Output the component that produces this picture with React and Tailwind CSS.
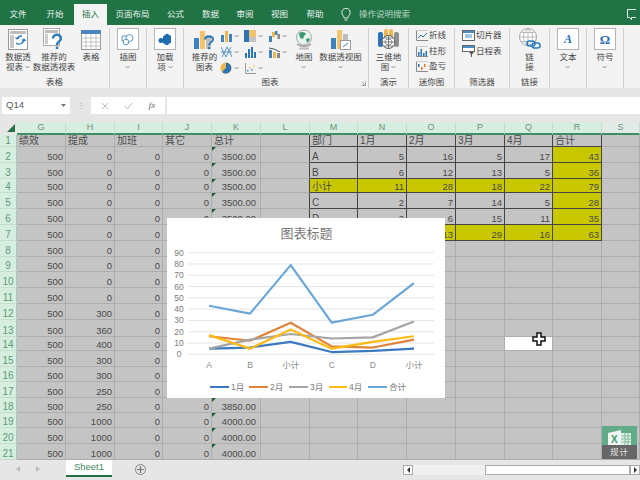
import React from 'react';

const Chev = ({ c = '#777' }) => (
  <svg width="5" height="4" viewBox="0 0 5 4" className="shrink-0"><path d="M0.5 1 L2.5 3 L4.5 1" fill="none" stroke={c} strokeWidth="0.8" /></svg>
);

const PivotIcon = () => (
  <svg width="20" height="21" viewBox="0 0 20 21"><rect x=".5" y=".5" width="19" height="20" fill="#fff" stroke="#999" /><rect x="2" y="2" width="16" height="3" fill="#bdbdbd" /><rect x="2" y="6" width="4" height="13" fill="#c8c8c8" /><path d="M8 14a5 5 0 0 0 8-4M16 10l-2 1.500M16 10l1.500 2M14 7a5 5 0 0 0-5 3M9 10l-1.500-1.500M9 10l2-1" fill="none" stroke="#2b7cb8" strokeWidth="1.300" /></svg>
);
const RecPivotIcon = () => (
  <svg width="22" height="22" viewBox="0 0 22 22"><rect x=".5" y=".5" width="16" height="17" fill="#fff" stroke="#aaa" /><rect x="2" y="2" width="13" height="3" fill="#bdbdbd" /><rect x="2" y="6" width="3" height="10" fill="#ccc" /><path d="M10 10.500c0-5 8-5 8 0 0 3-4 3-4 6.500" fill="none" stroke="#2b7cb8" strokeWidth="2.300" /><rect x="12.800" y="18.500" width="2.500" height="2.500" fill="#2b7cb8" /></svg>
);
const TableIcon = () => (
  <svg width="20" height="20" viewBox="0 0 20 20"><rect x=".5" y=".5" width="19" height="19" fill="#fff" stroke="#999" /><rect x="0" y="0" width="20" height="4" fill="#4d86bd" /><path d="M0 8h20M0 12h20M0 16h20M5 4v16M10 4v16M15 4v16" stroke="#b5b5b5" strokeWidth=".8" /></svg>
);
const BoxIcon = ({ children }) => (
  <div className="w-[22px] h-[22px] bg-white border border-[#b4b4b4] flex items-center justify-center">{children}</div>
);
const IllIcon = () => (
  <svg width="14" height="13" viewBox="0 0 14 13"><path d="M1 3h6v5H1z" fill="#fff" stroke="#5a97c8" /><circle cx="8.500" cy="5" r="3.500" fill="#fff" stroke="#5a97c8" /><circle cx="5" cy="9" r="2.800" fill="#fff" stroke="#5a97c8" /></svg>
);
const AddIcon = () => (
  <svg width="14" height="13" viewBox="0 0 14 13"><path d="M5 3.500 9 .5 13 3v6.500L9 12.500 5 10z" fill="#1f6cb0" /><circle cx="3" cy="7.500" r="2.500" fill="#1f6cb0" /></svg>
);
const RecChartIcon = () => (
  <svg width="21" height="20" viewBox="0 0 21 20"><rect x="0" y="8" width="5" height="11" fill="#3f82c0" /><rect x="6" y="1" width="5" height="18" fill="#f2c46d" /><rect x="12" y="5" width="5" height="14" fill="#bdbdbd" /><path d="M11 9.500c0-4 8-4 8 0 0 2.500-4 2.500-4 6" fill="none" stroke="#2b7cb8" strokeWidth="2" /><rect x="14" y="17" width="2.200" height="2.200" fill="#2b7cb8" /></svg>
);
const Bars = () => (
  <svg width="11" height="11" viewBox="0 0 11 11"><rect x="0" y="4" width="3" height="7" fill="#3f82c0" /><rect x="4" y="0" width="3" height="11" fill="#f0b64e" /><rect x="8" y="3" width="3" height="8" fill="#3f82c0" /></svg>
);
const Treemap = () => (
  <svg width="12" height="12" viewBox="0 0 12 12"><rect width="5" height="12" fill="#2d73b5" /><rect x="5" width="7" height="7" fill="#f2c46d" /><rect x="5" y="7" width="7" height="5" fill="#c4c4c4" /></svg>
);
const Waterfall = () => (
  <svg width="11" height="11" viewBox="0 0 11 11"><rect x="0" y="5" width="3" height="6" fill="#3f82c0" /><rect x="3" y="1" width="3" height="5" fill="#f0b64e" /><rect x="6" y="0" width="2.500" height="4" fill="#3f82c0" /><rect x="8.500" y="3" width="2.500" height="5" fill="#888" /></svg>
);
const Cross = () => (
  <svg width="11" height="12" viewBox="0 0 11 12"><path d="M0 1 5 11 10 1M1 11 6 1 11 11M0 6h11" fill="none" stroke="#4a8cc4" strokeWidth=".9" /></svg>
);
const Stat = () => (
  <svg width="11" height="11" viewBox="0 0 11 11"><g fill="#2d73b5"><rect y="6" width="2" height="5" /><rect x="3" y="2" width="2" height="9" /><rect x="6" y="0" width="2" height="11" /><rect x="9" y="5" width="2" height="6" /></g></svg>
);
const Combo = () => (
  <svg width="11" height="11" viewBox="0 0 11 11"><rect x="0" y="3" width="3" height="8" fill="#3f82c0" /><rect x="4" y="5" width="3" height="6" fill="#f0b64e" /><rect x="8" y="6" width="3" height="5" fill="#888" /><path d="M0 1 5 2 11 5" fill="none" stroke="#555" /></svg>
);
const Pie = () => (
  <svg width="12" height="12" viewBox="0 0 12 12"><circle cx="6" cy="6" r="5.500" fill="#f0b64e" /><path d="M6 6V.5A5.500 5.500 0 1 1 2 10z" fill="#2d73b5" /></svg>
);
const Scatter = () => (
  <svg width="11" height="11" viewBox="0 0 11 11"><path d="M.5 0v10.500H11" fill="none" stroke="#999" /><g><rect x="2" y="7" width="1.500" height="1.500" fill="#3f82c0" /><rect x="4" y="4" width="1.500" height="1.500" fill="#f0b64e" /><rect x="6" y="6" width="1.500" height="1.500" fill="#3f82c0" /><rect x="8" y="2" width="1.500" height="1.500" fill="#f0b64e" /></g></svg>
);
const Globe = () => (
  <svg width="20" height="21" viewBox="0 0 20 21"><circle cx="10" cy="8.500" r="7.500" fill="#e8f2ef" stroke="#a8a8a8" /><path d="M5 4c3-2 6-1 7 1l-2 2-1 3-3-1zM12 10l3-1 1 2-3 3z" fill="#3e9a6d" /><path d="M3 15c3 3 11 3 14 0M10 16v2" fill="none" stroke="#999" strokeWidth="1.200" /><rect x="5" y="18.500" width="10" height="2" fill="#bdbdbd" /></svg>
);
const PivotChart = () => (
  <svg width="20" height="20" viewBox="0 0 20 20"><rect x="0" y="8" width="5" height="11" fill="#3f82c0" /><rect x="6" y="0" width="5" height="19" fill="#f2c46d" /><rect x="12" y="4" width="5" height="8" fill="#bdbdbd" /><rect x="9.500" y="10.500" width="10" height="9" fill="#fff" stroke="#999" /><path d="M12 17l5-4" stroke="#2b7cb8" /></svg>
);
const Map3D = () => (
  <svg width="21" height="21" viewBox="0 0 21 21"><rect x="0" y="3" width="5" height="15" rx="2" fill="#2d73b5" /><rect x="6" y="0" width="4" height="12" rx="2" fill="#f0b64e" /><rect x="11" y="0" width="4" height="12" rx="2" fill="#f0b64e" /><rect x="16" y="3" width="5" height="15" rx="2" fill="#8f8f8f" /><circle cx="10.500" cy="13" r="6.500" fill="#fff" stroke="#555" /><path d="M4 13h13M10.500 6.500v13M6 9h9M6 17h9M7 13c0-4 7-4 7 0s-7 4-7 0" fill="none" stroke="#555" strokeWidth=".7" /></svg>
);
const Spark = ({ k }) => (
  <svg width="12" height="11" viewBox="0 0 12 11"><path d="M.5 0v10.500H12" fill="none" stroke="#8a8a8a" /><path d="M0 .5h12" stroke="#ccc" />{k === 0 && <path d="M2 8 5 5 7 7 11 3" fill="none" stroke="#2d73b5" />}{k === 1 && <g fill="#2d73b5"><rect x="2" y="6" width="1.500" height="4" /><rect x="4.500" y="3" width="1.500" height="7" /><rect x="7" y="7" width="1.500" height="3" /><rect x="9.500" y="5" width="1.500" height="5" /></g>}{k === 2 && <g><rect x="2" y="3" width="1.500" height="3" fill="#2d73b5" /><rect x="5" y="6" width="1.500" height="3" fill="#e07a2c" /><rect x="8" y="3" width="1.500" height="3" fill="#e07a2c" /></g>}</svg>
);
const Slicer = ({ k }) => (
  <svg width="13" height="12" viewBox="0 0 13 12"><rect x=".5" y=".5" width="12" height={k ? 6 : 10} fill="#fff" stroke="#666" /><rect x="1" y="1" width="11" height="2" fill="#4a8cc4" />{!k && <path d="M3 5h7M3 7h7" stroke="#4a8cc4" />}{k === 1 && <path d="M7 7h5l-2 2.500V12H9V9.500z" fill="#555" />}</svg>
);
const LinkIcon = () => (
  <svg width="22" height="22" viewBox="0 0 22 22"><circle cx="9" cy="9" r="8.500" fill="#fff" stroke="#a5a5a5" /><path d="M.5 9h17M9 .5v17M2 4.500h14M2 13.500h14M9 .5c-6 4-6 13 0 17M9 .5c6 4 6 13 0 17" fill="none" stroke="#a5a5a5" strokeWidth=".7" /><rect x="8" y="13" width="8" height="5" rx="2.500" fill="none" stroke="#2b7cb8" strokeWidth="1.500" /><rect x="13" y="15" width="8" height="5" rx="2.500" fill="none" stroke="#2b7cb8" strokeWidth="1.500" /></svg>
);
const Bulb = () => (
  <svg width="10" height="14" viewBox="0 0 10 14"><path d="M3.200 10C3 8 .8 7 .8 4.500a4.200 4.200 0 0 1 8.400 0C9.200 7 7 8 6.800 10zM3.500 12h3" fill="none" stroke="#e6f0ea" strokeWidth="1" /></svg>
);
const Comment = () => (
  <svg width="9" height="11" viewBox="0 0 9 11"><path d="M9 .5H.5v8h2l2 2V8.500H9" fill="none" stroke="#e6f0ea" /></svg>
);

const Big = ({ icon, lines, chev, w, iconTop = 'h-[22px]' }) => (
  <div className={`flex flex-col items-center shrink-0 ${w}`}>
    <div className={`flex items-end justify-center ${iconTop}`}>{icon}</div>
    <div className="mt-[2px] text-[8.500px] leading-[10px] whitespace-nowrap text-center text-[#444] flex flex-col items-center">
      {lines.map((l, i) => (
        <div key={i} className="flex items-center h-[10px] gap-[2px]">{l}{chev && i === lines.length - 1 && chev !== 'below' && <Chev />}</div>
      ))}
      {chev === 'below' && <div className="h-[10px] flex items-center"><Chev /></div>}
    </div>
  </div>
);

const Group = ({ w, label, children, className = '', labelClass = '' }) => (
  <div className={`flex flex-col h-[60px] mt-[3px] border-r border-[#d0d0d0] shrink-0 relative ${w}`}>
    <div className={`h-[49px] flex ${className}`}>{children}</div>
    <div className={`flex-1 text-center text-[8.500px] leading-[11px] text-[#444] ${labelClass}`}>{label}</div>
  </div>
);

const Small = ({ icon, chev = true }) => (
  <div className="flex items-center gap-[2px] h-[16px]">
    <div className="w-[12px] flex justify-center">{icon}</div>
    {chev && <Chev />}
  </div>
);

const Ribbon = () => (
  <div className="h-[63px] bg-[#f3f3f3] flex shrink-0">
    <Group w="w-[110px]" label="表格" className="pl-[3px]">
      <Big w="w-[30px]" icon={<PivotIcon />} lines={['数据透', '视表']} chev />
      <Big w="w-[42px]" icon={<RecPivotIcon />} lines={['推荐的', '数据透视表']} />
      <Big w="w-[32px]" icon={<TableIcon />} lines={['表格']} />
    </Group>
    <Group w="w-[37px]" label="" className="justify-center">
      <Big w="w-[30px]" icon={<BoxIcon><IllIcon /></BoxIcon>} lines={['插图']} chev="below" />
    </Group>
    <Group w="w-[37px]" label="" className="justify-center">
      <Big w="w-[30px]" icon={<BoxIcon><AddIcon /></BoxIcon>} lines={['加载', '项']} chev />
    </Group>
    <Group w="w-[185px]" label="图表" className="pl-[7px]" labelClass="pr-[12px]">
      <Big w="w-[27px]" icon={<RecChartIcon />} lines={['推荐的', '图表']} />
      <div className="flex flex-col ml-[2px] w-[24px]"><Small icon={<Bars />} /><Small icon={<Cross />} /><Small icon={<Pie />} /></div>
      <div className="flex flex-col w-[24px]"><Small icon={<Treemap />} /><Small icon={<Stat />} /><Small icon={<Scatter />} /></div>
      <div className="flex flex-col w-[21px]"><Small icon={<Waterfall />} /><Small icon={<Combo />} /></div>
      <Big w="w-[30px]" icon={<Globe />} lines={['地图']} chev="below" />
      <Big w="w-[43px]" icon={<PivotChart />} lines={['数据透视图']} chev="below" />
      <svg width="5" height="5" viewBox="0 0 5 5" className="absolute right-[2px] bottom-[2px]"><path d="M.5 4.500h4v-4M1 1l3 3" fill="none" stroke="#777" strokeWidth=".7" /></svg>
    </Group>
    <Group w="w-[40px]" label="演示" className="justify-center">
      <Big w="w-[36px]" icon={<Map3D />} lines={['三维地', '图']} chev />
    </Group>
    <Group w="w-[46px]" label="迷你图" className="flex-col pl-[7px]">
      {[['折线', 0], ['柱形', 1], ['盈亏', 2]].map(([t, k]) => (
        <div key={t} className="flex items-center gap-[1px] h-[15.500px] text-[8.500px] text-[#444]"><Spark k={k} />{t}</div>
      ))}
    </Group>
    <Group w="w-[55px]" label="筛选器" className="flex-col pl-[7px]">
      {[['切片器', 0], ['日程表', 1]].map(([t, k]) => (
        <div key={t} className="flex items-center gap-[1px] h-[15.500px] text-[8.500px] text-[#444]"><Slicer k={k} />{t}</div>
      ))}
    </Group>
    <Group w="w-[40px]" label="链接" className="justify-center">
      <Big w="w-[30px]" icon={<LinkIcon />} lines={['链', '接']} />
    </Group>
    <Group w="w-[37px]" label="" className="justify-center">
      <Big w="w-[30px]" icon={<BoxIcon><span className="text-[#2b6cb0] text-[12px] italic font-bold font-['Liberation_Serif',serif] leading-none">A</span></BoxIcon>} lines={['文本']} chev="below" />
    </Group>
    <Group w="w-[37px]" label="" className="justify-center">
      <Big w="w-[30px]" icon={<BoxIcon><span className="text-[#2b6cb0] text-[13px] font-bold font-['Liberation_Serif',serif] leading-none">Ω</span></BoxIcon>} lines={['符号']} chev="below" />
    </Group>
  </div>
);

const Tabs = () => {
  const tabs = [['文件', 'w-[36px]'], ['开始', 'w-[38px]'], ['插入', 'w-[33px]'], ['页面布局', 'w-[51px]'], ['公式', 'w-[35px]'], ['数据', 'w-[35px]'], ['审阅', 'w-[34px]'], ['视图', 'w-[35px]'], ['帮助', 'w-[36px]']];
  return (
    <div className="h-[25px] bg-[#217346] flex items-end shrink-0 text-[8.500px] text-[#e8f2ec]">
      {tabs.map(([t, w]) => (
        <div key={t} className={`${w} h-[21px] flex items-center justify-center ${t === '插入' ? 'bg-[#f3f3f3] text-[#217346]' : ''}`}>{t}</div>
      ))}
      <div className="h-[21px] flex items-center ml-[8px]"><Bulb /></div>
      <div className="h-[21px] flex items-center ml-[8px] text-[#bcd6c7]">操作说明搜索</div>
      <div className="h-[21px] flex items-center ml-auto mr-[4px]"><Comment /></div>
    </div>
  );
};

const FormulaBar = () => (
  <div className="h-[34px] bg-[#e6e6e6] shrink-0 pt-[9px] flex items-start text-[9.500px] text-[#555]">
    <div className="ml-[2px] w-[68px] h-[17px] bg-white flex items-center justify-between px-[4px]">Q14<svg width="5" height="3" viewBox="0 0 5 3"><path d="M0 0h5L2.500 3z" fill="#777" /></svg></div>
    <div className="w-[21px] h-[17px] flex items-center justify-center text-[#aaa] text-[8px]">⋮</div>
    <div className="w-[74px] h-[17px] bg-white flex items-center justify-around px-[2px] text-[#bbb]">
      <svg width="8" height="8" viewBox="0 0 8 8"><path d="M1 1l6 6M7 1L1 7" stroke="#bbb" /></svg>
      <svg width="9" height="8" viewBox="0 0 9 8"><path d="M1 4l2.500 3L8 1" fill="none" stroke="#bbb" /></svg>
      <span className="italic font-['Liberation_Serif',serif] text-[#666] text-[9px]">fx</span>
    </div>
    <div className="ml-[2px] flex-1 h-[17px] bg-white" />
  </div>
);

const COLS = ['G', 'H', 'I', 'J', 'K', 'L', 'M', 'N', 'O', 'P', 'Q', 'R', 'S'];
const hVals = [0, 0, 0, 0, 0, 0, 0, 0, 0, 0, 300, 360, 400, 300, 300, 250, 250, 1000, 1000, 1000];
const kVals = ['3500.00', '3500.00', '3500.00', '3500.00', '3500.00', '3500.00', '3500.00', '3500.00', '3500.00', '3500.00', '3800.00', '3860.00', '3900.00', '3800.00', '3800.00', '3750.00', '3850.00', '4000.00', '4000.00', '4000.00'];
const TABLE = [
  ['部门', '1月', '2月', '3月', '4月', '合计'],
  ['A', 5, 16, 5, 17, 43],
  ['B', 6, 12, 13, 5, 36],
  ['小计', 11, 28, 18, 22, 79],
  ['C', 2, 7, 14, 5, 28],
  ['D', 3, 6, 15, 11, 35],
  ['小计', 5, 13, 29, 16, 63],
];
const YELLOW = 'bg-[#c9c800]';

function cellFor(r, c) {
  const idx = COLS.indexOf(c);
  let text = '';
  let left = false;
  let inTable = false;
  let yellow = false;
  let tri = false;
  if (idx <= 4) {
    if (r === 1) { text = ['绩效', '提成', '加班', '其它', '总计'][idx]; left = true; }
    else if (c === 'G') text = 500;
    else if (c === 'H') text = hVals[r - 2];
    else if (c === 'I' || c === 'J') text = 0;
    else { text = kVals[r - 2]; tri = true; }
  }
  if (idx >= 6 && idx <= 11 && r <= 7) {
    inTable = true;
    text = TABLE[r - 1][idx - 6];
    left = r === 1 || idx === 6;
    yellow = (r >= 2 && idx === 11) || r === 4 || r === 7;
  }
  // cells wholly behind the chart show nothing
  const behind = (r >= 7 && r <= 17 && (c === 'J' || c === 'K')) || (r === 7 && (c === 'M' || c === 'N'));
  if (behind) { text = ''; tri = false; }
  return { text, left, inTable, yellow, tri };
}

const Sheet = () => {
  const rows = Array.from({ length: 21 }, (_, i) => i + 1);
  return (
    <div className="relative h-[338px] shrink-0 overflow-hidden bg-[#c4c4c4]">
      <div className="grid grid-cols-[17px_49px_49px_48px_49px_49px_49px_48px_49px_49px_49px_48px_49px_38px] grid-rows-[13px_12px_16px_16px_14px_16px_16px_16px_16px_15px_16px_16px_16px_17px_14px_16px_15px_16px_15px_15px_16px_16px] text-[9.500px] leading-[11px] text-[#4a4a4a]">
        <div className="bg-[#e6e6e6] border-b-2 border-[#e6e6e6] flex items-end justify-end pr-[2px] pb-[1px]">
          <svg width="8" height="8" viewBox="0 0 8 8"><path d="M8 0v8H0z" fill="#217346" /></svg>
        </div>
        {COLS.map((c) => (
          <div key={c} className={`border-b-2 border-b-[#3f8f66] border-r border-r-[#c6ddd0] flex items-center justify-center text-[9px] text-[#6f8f7e] ${c === 'S' ? 'bg-[#e2ece6]' : 'bg-[#d5eee0]'}`}>{c}</div>
        ))}
        {rows.map((r) => (
          <React.Fragment key={r}>
            <div className="bg-[#d5eee0] border-r border-r-[#a9c9b7] border-b border-b-[#c6ddd0] flex items-end justify-center text-[#5f9a78] text-[10px] leading-[10px]">{r}</div>
            {COLS.map((c) => {
              const { text, left, inTable, yellow, tri } = cellFor(r, c);
              const nextIsTable = c === 'L' && r <= 7;
              const border = inTable
                ? 'border-r border-r-[#454545] border-b border-b-[#454545]'
                : nextIsTable
                  ? 'border-r border-r-[#454545] border-b border-b-[#adadad]'
                  : 'border-r border-r-[#adadad] border-b border-b-[#adadad]';
              const white = r === 14 && c === 'Q';
              const bg = white ? 'bg-white' : yellow ? YELLOW : 'bg-[#c4c4c4]';
              const pad = left ? 'justify-start pl-[2px] text-[10px] leading-[10px]' : c === 'K' ? 'justify-end pr-[4px]' : 'justify-end pr-[2px]';
              return (
                <div key={c} className={`relative flex items-end overflow-hidden whitespace-nowrap ${border} ${bg} ${pad}`}>
                  {tri && <span className="absolute top-0 left-0 w-0 h-0 border-t-[4px] border-r-[4px] border-t-[#1d5c33] border-r-transparent" />}
                  {text}
                </div>
              );
            })}
          </React.Fragment>
        ))}
      </div>
      <Chart />
      <div className="absolute left-[532px] top-[210px]">
        <svg width="14" height="14" viewBox="0 0 14 14"><path d="M5 1h4v4h4v4H9v4H5V9H1V5h4z" fill="#fff" stroke="#111" strokeWidth="1.500" /></svg>
      </div>
      <div className="absolute left-[602px] top-[304px] w-[35px] h-[33px] flex flex-col">
        <div className="h-[19px] bg-[#62ab88] flex items-end justify-center">
          <svg width="24" height="15" viewBox="0 0 24 15"><path d="M0 3 13 0v15H0z" fill="#f1f5f2" /><rect x="13" y="3" width="10" height="12" fill="#dfeee6" /><path d="M13 6h10M13 9h10M13 12h10M17 3v12M20 3v12" stroke="#62ab88" strokeWidth=".7" /><text x="3" y="13" fontSize="10" fontWeight="700" fill="#3f9a6c">X</text></svg>
        </div>
        <div className="flex-1 bg-[#666] text-[#e4e4e4] text-[8.500px] flex items-center justify-center tracking-[1px]">规计</div>
      </div>
    </div>
  );
};

const xs = [42, 83, 123.700, 164.700, 205.700, 247];
const Y = (v) => 136.300 - v * 1.129;
const SERIES = [
  ['#3a78bf', [5, 6, 11, 2, 3, 5], '1月'],
  ['#df833a', [16, 12, 28, 7, 6, 13], '2月'],
  ['#a5a5a5', [5, 13, 18, 14, 15, 29], '3月'],
  ['#fdbb14', [17, 5, 22, 5, 11, 16], '4月'],
  ['#6ba6d6', [43, 36, 79, 28, 35, 63], '合计'],
];
const LEG = [[43, 62], [82, 101], [122, 141], [162, 180], [201, 220]];
const CATS = ['A', 'B', '小计', 'C', 'D', '小计'];

const Chart = () => (
  <div className="absolute left-[167px] top-[96px] w-[278px] h-[180px] bg-white flex flex-col items-center">
    <div className="mt-[7px] text-[13px] leading-[18px] text-[#777] pl-[1px]">图表标题</div>
    <svg width="278" height="155" viewBox="0 25 278 155" className="font-['Liberation_Sans','Noto_Sans_CJK_SC',sans-serif]">
      {[0, 10, 20, 30, 40, 50, 60, 70, 80, 90].map((v) => (
        <g key={v}>
          <line x1="21" x2="267" y1={Y(v)} y2={Y(v)} stroke="#e4e4e4" strokeWidth="1" />
          <text x="12" y={Y(v) + 3} fontSize="8.500" fill="#7a7a7a" textAnchor="middle">{v}</text>
        </g>
      ))}
      {CATS.map((c, i) => (
        <text key={i} x={xs[i]} y="150" fontSize="8.500" fill="#8a8a8a" textAnchor="middle">{c}</text>
      ))}
      {SERIES.map(([col, vals]) => (
        <polyline key={col} points={vals.map((v, i) => `${xs[i]},${Y(v)}`).join(' ')} fill="none" stroke={col} strokeWidth="2.200" strokeLinejoin="round" />
      ))}
      {SERIES.map(([col, , name], i) => (
        <g key={name}>
          <line x1={LEG[i][0]} x2={LEG[i][1]} y1="169" y2="169" stroke={col} strokeWidth="2" />
          <text x={LEG[i][1] + 2} y="172" fontSize="8.500" fill="#7a7a7a">{name}</text>
        </g>
      ))}
    </svg>
  </div>
);

const Bottom = () => (
  <div className="h-[20px] bg-[#e6e6e6] shrink-0 flex items-start">
    <div className="w-[66px] h-[17px] flex items-center">
      <svg width="4" height="6" viewBox="0 0 4 6" className="ml-[16px]"><path d="M4 0v6L0 3z" fill="#bbb" /></svg>
      <svg width="4" height="6" viewBox="0 0 4 6" className="ml-[16px]"><path d="M0 0v6l4-3z" fill="#bbb" /></svg>
    </div>
    <div className="w-[46px] h-[17px] bg-white border-b-2 border-[#217346] flex items-center justify-center text-[9.500px] text-[#3f8a63]">Sheet1</div>
    <div className="ml-[23px] mt-[4px] w-[11px] h-[11px] rounded-full border border-[#888] flex items-center justify-center">
      <svg width="7" height="7" viewBox="0 0 7 7"><path d="M3.500 0v7M0 3.500h7" stroke="#777" strokeWidth="1.200" /></svg>
    </div>
    <div className="ml-[257px] mt-[5px] flex-1 h-[10px] flex items-stretch bg-[#f0f0f0]">
      <div className="w-[10px] bg-white border border-[#aaa] flex items-center justify-center">
        <svg width="3" height="6" viewBox="0 0 3 6"><path d="M3 0v6L0 3z" fill="#333" /></svg>
      </div>
      <div className="w-[72px]" />
      <div className="flex-1 bg-white border border-[#aaa]" />
      <div className="w-[10px] bg-white border border-[#aaa] flex items-center justify-center">
        <svg width="3" height="6" viewBox="0 0 3 6"><path d="M0 0v6l3-3z" fill="#333" /></svg>
      </div>
    </div>
  </div>
);

export default function App() {
  return (
    <div className="w-[640px] h-[480px] overflow-hidden flex flex-col font-['Liberation_Sans','Noto_Sans_CJK_SC',sans-serif]">
      <Tabs />
      <Ribbon />
      <FormulaBar />
      <Sheet />
      <Bottom />
    </div>
  );
}
